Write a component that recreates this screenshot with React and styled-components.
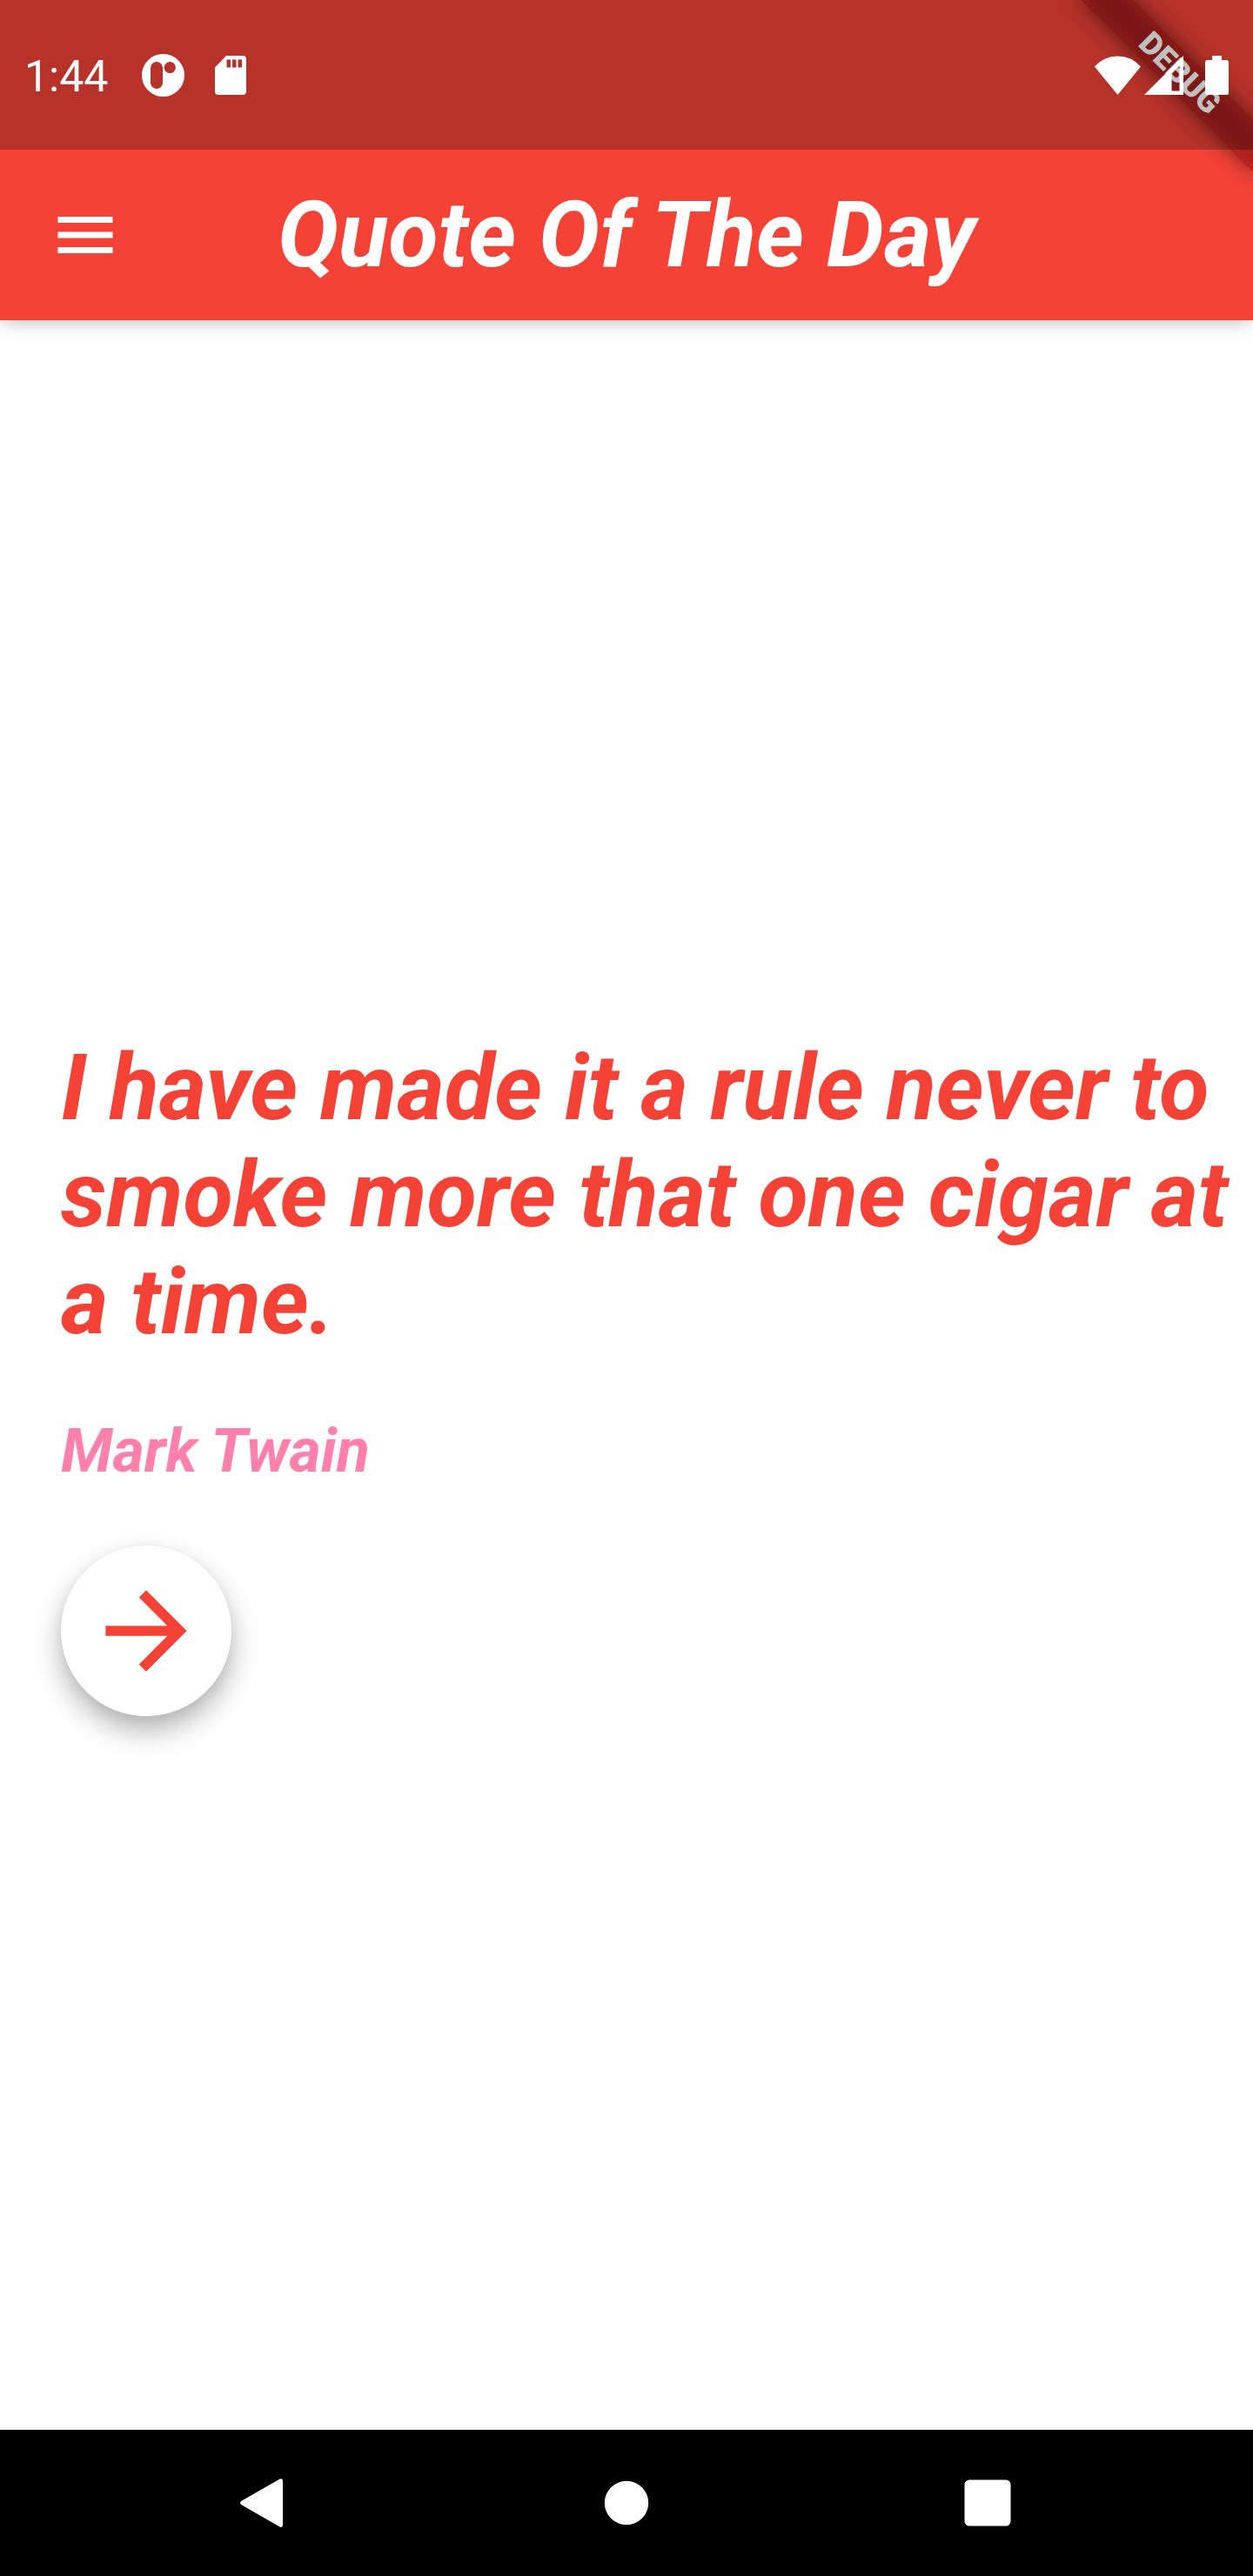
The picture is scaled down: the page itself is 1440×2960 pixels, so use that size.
import React from "react";
import styled, { createGlobalStyle } from "styled-components";

const GlobalStyle = createGlobalStyle`
  *, *::before, *::after { box-sizing: border-box; }
  body {
    margin: 0;
    background: #ffffff;
    font-family: Roboto, "Noto Sans", sans-serif;
  }
`;

const RED = "#f44336";

const Screen = styled.div`
  position: relative;
  display: flex;
  flex-direction: column;
  min-height: 100vh;
  overflow: hidden;
  background: #ffffff;
`;

const Header = styled.header`
  position: relative;
  background: ${RED};
  box-shadow: 0 6px 18px -3px rgba(0, 0, 0, 0.25);
`;

const StatusBar = styled.div`
  position: relative;
  z-index: 2;
  display: flex;
  align-items: center;
  justify-content: space-between;
  height: 172px;
  padding: 0 28px;
  background: rgba(0, 0, 0, 0.25);
  color: #ffffff;
`;

const StatusGroup = styled.div`
  display: flex;
  align-items: center;
  gap: ${({ $gap }) => $gap}px;
`;

const Clock = styled.time`
  padding: 4px 4px 0 0;
  font-size: 50px;
  line-height: 56px;
`;

const Glyph = styled.svg`
  display: block;
  flex: none;
  width: ${({ $w }) => $w}px;
  height: ${({ $h }) => $h}px;
  fill: currentColor;
`;

const Ribbon = styled.div`
  position: absolute;
  z-index: 1;
  top: 63px;
  right: -56px;
  width: 280px;
  height: 42px;
  transform: rotate(45deg);
  color: #ffffff;
  font-size: 36px;
  font-weight: 900;
  line-height: 42px;
  text-align: center;

  &::before {
    content: "";
    position: absolute;
    inset: 0;
    background: rgba(0, 0, 0, 0.5);
    filter: blur(12px);
  }
`;

const RibbonLabel = styled.span`
  position: relative;
  display: block;
  background: rgba(183, 28, 28, 0.63);
`;

const AppBar = styled.div`
  display: grid;
  grid-template-columns: 196px 1fr 196px;
  align-items: center;
  height: 196px;
  color: #ffffff;
`;

const IconButton = styled.button`
  display: flex;
  align-items: center;
  justify-content: center;
  height: 168px;
  padding: 0;
  border: 0;
  background: transparent;
  color: inherit;
  cursor: pointer;
`;

const Title = styled.h1`
  margin: 0;
  font-size: 105px;
  font-style: italic;
  font-weight: 700;
  line-height: 123px;
  text-align: center;
  white-space: nowrap;
`;

const Body = styled.main`
  flex: 1;
  display: flex;
  flex-direction: column;
  align-items: flex-start;
  justify-content: center;
  gap: 68px;
  padding-left: 70px;
`;

const Quote = styled.p`
  margin: 0;
  color: ${RED};
  font-size: 105px;
  font-style: italic;
  font-weight: 700;
  line-height: 123px;
`;

const Author = styled.p`
  margin: 0;
  color: #ff80ab;
  font-size: 70px;
  font-style: italic;
  font-weight: 700;
  line-height: 82px;
`;

const NextButton = styled.button`
  display: flex;
  align-items: center;
  justify-content: center;
  width: 196px;
  height: 196px;
  padding: 0;
  border: 0;
  border-radius: 50%;
  background: #ffffff;
  color: ${RED};
  box-shadow: 0 16px 32px rgba(0, 0, 0, 0.3), 0 2px 14px rgba(0, 0, 0, 0.04);
  cursor: pointer;
`;

const NavBar = styled.nav`
  display: grid;
  grid-template-columns: repeat(3, 1fr);
  padding: 0 90px;
  background: #000000;
  color: #ffffff;
`;

export default function App() {
  return (
    <Screen>
      <GlobalStyle />
      <Header>
        <StatusBar>
          <StatusGroup $gap={35}>
            <Clock>1:44</Clock>
            <Glyph $w={49} $h={49} viewBox="0 0 49 49" aria-hidden="true">
              <path
                fillRule="evenodd"
                d="M24.500 0a24.500 24.500 0 1 1 0 49a24.500 24.500 0 1 1 0-49zM17 9a7 7 0 0 0-7 7v17a7 7 0 0 0 14 0V16a7 7 0 0 0-7-7zM32.300 9a6.600 6.600 0 1 0 0 13.200a6.600 6.600 0 1 0 0-13.200z"
              />
            </Glyph>
            <Glyph $w={36} $h={45} viewBox="0 0 36 45" aria-hidden="true">
              <path
                fillRule="evenodd"
                d="M13 0H32a4 4 0 0 1 4 4V41a4 4 0 0 1-4 4H4a4 4 0 0 1-4-4V13.500zM13.500 4.500v9h4.500v-9zM20 4.500v9h4.500v-9zM26.500 4.500v9h4.500v-9z"
              />
            </Glyph>
          </StatusGroup>
          <StatusGroup $gap={4}>
            <Glyph $w={53} $h={45} viewBox="0 0 53 45" aria-hidden="true">
              <path d="M26.500 45L0 12.500Q11 .5 26.500 .5T53 12.500z" />
            </Glyph>
            <Glyph $w={66} $h={45} viewBox="0 0 66 45" aria-hidden="true">
              <path fillRule="evenodd" d="M45 0V45H0zM40.500 11L31.500 20V40.500h9z" />
            </Glyph>
            <Glyph $w={27} $h={45} viewBox="0 0 27 45" aria-hidden="true">
              <path d="M8 0H19V5H24.500A2.500 2.500 0 0 1 27 7.500V42.500A2.500 2.500 0 0 1 24.500 45H2.500A2.500 2.500 0 0 1 0 42.500V7.500A2.500 2.500 0 0 1 2.500 5H8z" />
            </Glyph>
          </StatusGroup>
        </StatusBar>
        <Ribbon>
          <RibbonLabel>DEBUG</RibbonLabel>
        </Ribbon>
        <AppBar>
          <IconButton type="button" aria-label="Open menu">
            <Glyph $w={84} $h={84} viewBox="0 0 24 24" aria-hidden="true">
              <path d="M3 18h18v-2H3v2zm0-5h18v-2H3v2zm0-7v2h18V6H3z" />
            </Glyph>
          </IconButton>
          <Title>Quote Of The Day</Title>
        </AppBar>
      </Header>

      <Body>
        <Quote>I have made it a rule never to smoke more that one cigar at a time.</Quote>
        <Author>Mark Twain</Author>
        <NextButton type="button" aria-label="Next quote">
          <Glyph $w={140} $h={140} viewBox="0 0 24 24" aria-hidden="true">
            <path d="M12 4l-1.410 1.410L16.170 11H4v2h12.170l-5.580 5.590L12 20l8-8z" />
          </Glyph>
        </NextButton>
      </Body>

      <NavBar>
        <IconButton type="button" aria-label="Back">
          <Glyph $w={84} $h={84} viewBox="0 0 84 84" aria-hidden="true">
            <path d="M63.500 14.500Q67 13 67 17.500V66.500Q67 71 63.500 69.500L20 44.500Q16 42 20 39.500z" />
          </Glyph>
        </IconButton>
        <IconButton type="button" aria-label="Home">
          <Glyph $w={84} $h={84} viewBox="0 0 84 84" aria-hidden="true">
            <circle cx="42" cy="42" r="25.200" />
          </Glyph>
        </IconButton>
        <IconButton type="button" aria-label="Recent apps">
          <Glyph $w={84} $h={84} viewBox="0 0 84 84" aria-hidden="true">
            <rect x="10.500" y="15.500" width="53" height="53" rx="5.500" />
          </Glyph>
        </IconButton>
      </NavBar>
    </Screen>
  );
}
